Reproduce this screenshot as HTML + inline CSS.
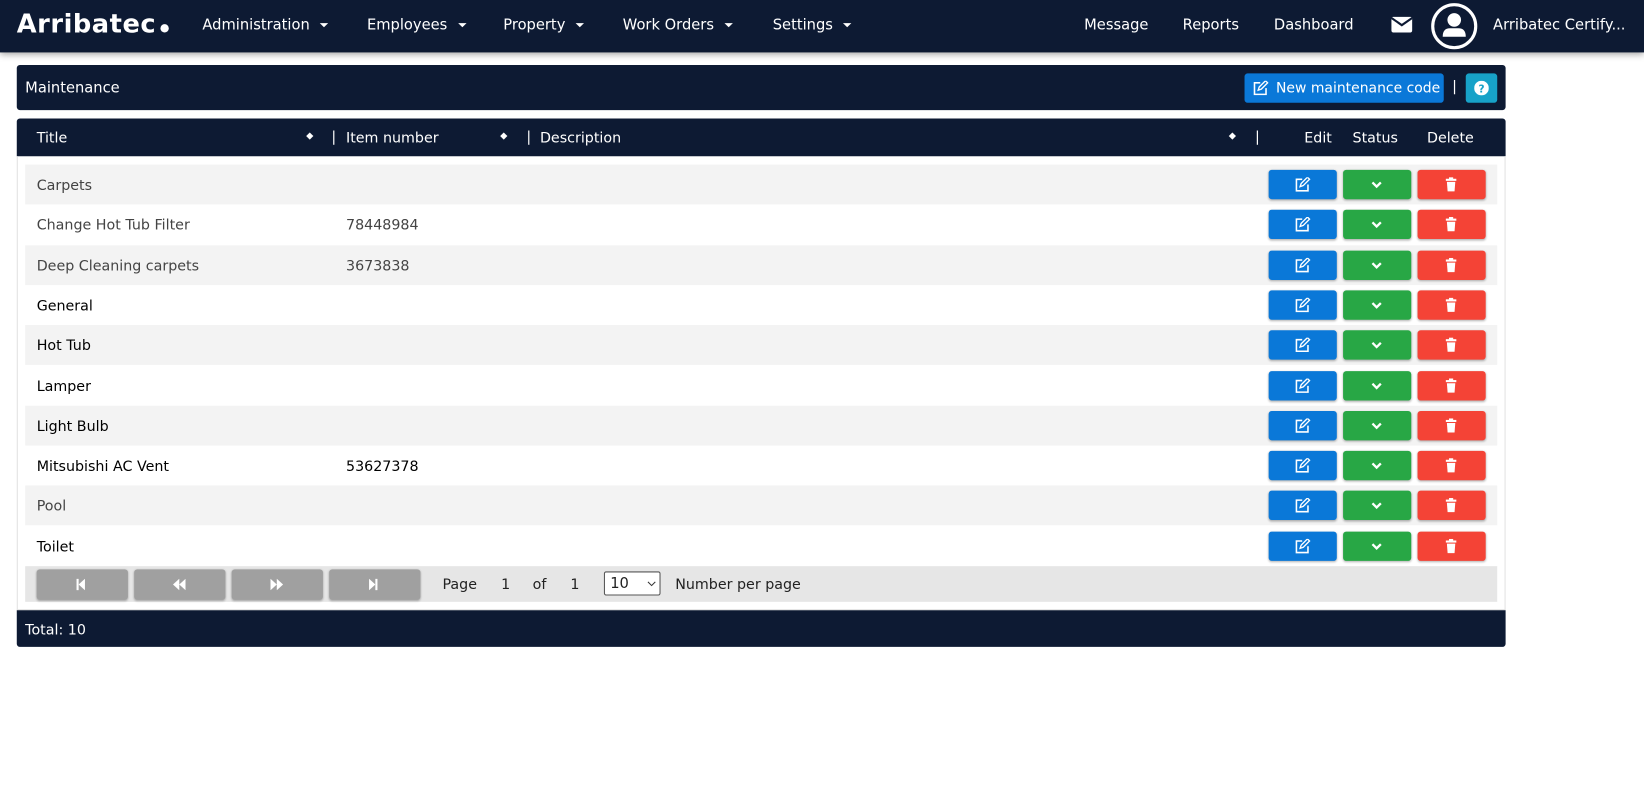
<!DOCTYPE html>
<html><head><meta charset="utf-8"><style>
*{box-sizing:border-box;margin:0;padding:0}
body{width:1644px;height:797px;background:#fff;font-family:"DejaVu Sans","Liberation Sans",sans-serif;font-size:13.6px;color:#222;position:relative;overflow:hidden}
#w{position:absolute;left:0;top:0;width:1568px;height:760px;transform:scale(1.04847);transform-origin:0 0}
.nav{position:absolute;left:0;top:0;width:1568px;height:50px;background:#0d1a33;box-shadow:0 2px 6px rgba(0,0,0,.35);color:#fff}
.nav span{position:absolute;top:16px;font-size:14px}
.logo{position:absolute;left:16px;top:8px;font-size:24.5px;font-weight:bold;letter-spacing:0.5px;color:#fff}
.car{display:inline-block;width:0;height:0;border-left:4px solid transparent;border-right:4px solid transparent;border-top:4px solid #fff;margin-left:10px;vertical-align:middle}
.bar{position:absolute;left:16px;width:1420px;background:#0d1a33;color:#fff;border-radius:3px}
.row{position:absolute;left:24px;width:1404px;height:38px}
.row span{position:absolute;top:12px}
.btn{position:absolute;top:5px;width:65px;height:28px;border-radius:3px;box-shadow:0 1px 2px rgba(0,0,0,.3)}
.b1{left:1186px;background:#0a78d8}.b2{left:1257px;background:#28a745}.b3{left:1328px;background:#f44336}
.btn svg{position:absolute;left:25px;top:7px}
.pg{position:absolute;top:3px;width:87px;height:29px;background:#a0a0a0;border-radius:3px;box-shadow:0 1px 2px rgba(0,0,0,.3)}
.pg svg{position:absolute;left:37px;top:9px}
</style></head><body><div id="w">
<div class="nav">
<div class="logo">Arribatec<span style="position:static;display:inline-block;width:8px;height:8px;background:#fff;border-radius:50%;margin-left:4px"></span></div>
<span style="left:193px">Administration<i class="car"></i></span>
<span style="left:350px">Employees<i class="car"></i></span>
<span style="left:480px">Property<i class="car"></i></span>
<span style="left:594px">Work Orders<i class="car"></i></span>
<span style="left:737px">Settings<i class="car"></i></span>
<span style="left:1034px">Message</span>
<span style="left:1128px">Reports</span>
<span style="left:1215px">Dashboard</span>
<svg style="position:absolute;left:1327px;top:16px" width="20" height="15" viewBox="0 0 20 15"><rect x="0" y="0" width="20" height="15" rx="2" fill="#fff"/><path d="M0 1 L10 8 L20 1" stroke="#0d1a33" stroke-width="2" fill="none"/></svg>
<svg style="position:absolute;left:1364px;top:2px" width="46" height="46" viewBox="0 0 46 46"><circle cx="23" cy="23" r="20.5" stroke="#fff" stroke-width="3" fill="none"/><circle cx="23" cy="17" r="6.5" fill="#fff"/><path d="M12 33 Q12 25 19 25 L27 25 Q34 25 34 33 Z" fill="#fff"/></svg>
<span style="left:1424px">Arribatec Certify...</span>
</div>
<div class="bar" style="top:62px;height:43px"><span style="position:absolute;left:8px;top:14px;font-size:14px">Maintenance</span>
<div style="position:absolute;left:1171px;top:8px;width:190px;height:28px;background:#0a78d8;border-radius:3px;font-size:13.3px;line-height:30px;padding-left:30px;white-space:nowrap">New maintenance code
<svg style="position:absolute;left:8px;top:7px" width="15" height="14" viewBox="0 0 15 14"><path d="M7 2H1.5v11h11V7" stroke="#fff" stroke-width="1.5" fill="none"/><path d="M5 9l1-3 6-6 2 2-6 6z" stroke="#fff" stroke-width="1.3" fill="none"/></svg></div>
<span style="position:absolute;left:1369px;top:13px">|</span>
<div style="position:absolute;left:1382px;top:8px;width:30px;height:28px;background:#17a2c8;border-radius:3px"><svg style="position:absolute;left:8px;top:7px" width="14" height="14"><circle cx="7" cy="7" r="7" fill="#fff"/><text x="7" y="11" font-size="10" font-weight="bold" text-anchor="middle" fill="#17a2c8" font-family="DejaVu Sans">?</text></svg></div>
</div>
<div class="bar" style="top:113px;height:36px;border-radius:3px 3px 0 0">
<span style="position:absolute;left:19px;top:11px">Title</span><span style="position:absolute;left:276px;top:12px;font-size:9px">◆</span><span style="position:absolute;left:300px;top:10px">|</span>
<span style="position:absolute;left:314px;top:11px">Item number</span><span style="position:absolute;left:461px;top:12px;font-size:9px">◆</span><span style="position:absolute;left:486px;top:10px">|</span>
<span style="position:absolute;left:499px;top:11px">Description</span><span style="position:absolute;left:1156px;top:12px;font-size:9px">◆</span><span style="position:absolute;left:1181px;top:10px">|</span>
<span style="position:absolute;left:1228px;top:11px">Edit</span><span style="position:absolute;left:1274px;top:11px">Status</span><span style="position:absolute;left:1345px;top:11px">Delete</span>
</div>
<div style="position:absolute;left:16px;top:149px;width:1420px;height:433px;border:1px solid #e2e2e2;border-top:none"></div>
<div id="rows"></div>
<div class="row" style="top:540px;height:34px;background:#e6e6e6">
<div class="pg" style="left:11px"><svg width="10" height="11"><rect x="1" y="0" width="2" height="11" fill="#fff"/><path d="M9 0v11L3 5.5z" fill="#fff"/></svg></div>
<div class="pg" style="left:104px"><svg width="12" height="11"><path d="M6 0v11L0 5.5zM12 0v11L6 5.5z" fill="#fff"/></svg></div>
<div class="pg" style="left:197px"><svg width="12" height="11"><path d="M0 0v11L6 5.5zM6 0v11L12 5.5z" fill="#fff"/></svg></div>
<div class="pg" style="left:290px"><svg width="10" height="11"><path d="M1 0v11L7 5.5z" fill="#fff"/><rect x="7" y="0" width="2" height="11" fill="#fff"/></svg></div>
<span style="left:398px;top:10px">Page</span><span style="left:454px;top:10px">1</span><span style="left:484px;top:10px">of</span><span style="left:520px;top:10px">1</span>
<div style="position:absolute;left:552px;top:5px;width:54px;height:23px;border:1px solid #555;background:#fff;border-radius:2px;font-size:14px;padding:3px 5px">10<svg style="position:absolute;left:40px;top:8px" width="9" height="6"><path d="M1 1l3.5 3.5L8 1" stroke="#333" fill="none"/></svg></div>
<span style="left:620px;top:10px">Number per page</span>
</div>
<div class="bar" style="top:582px;height:35px;border-radius:0 0 3px 3px"><span style="position:absolute;left:8px;top:11px">Total: 10</span></div>
</div>
<script>
var d=[["Carpets","",1],["Change Hot Tub Filter","78448984",0],["Deep Cleaning carpets","3673838",1],["General","",0],["Hot Tub","",1],["Lamper","",0],["Light Bulb","",1],["Mitsubishi AC Vent","53627378",0],["Pool","",1],["Toilet","",0]];
var h="";d.forEach(function(r,i){var c=(i<3||i==8)?"#444":"#000";h+='<div class="row" style="top:'+(157+i*38.3)+'px;background:'+(r[2]?'#f3f3f3':'#fff')+';color:'+c+'"><span style="left:11px">'+r[0]+'</span><span style="left:306px">'+r[1]+'</span>'+
'<div class="btn b1"><svg width="15" height="14" viewBox="0 0 15 14"><path d="M7 2H1.5v11h11V7" stroke="#fff" stroke-width="1.5" fill="none"/><path d="M5 9l1-3 6-6 2 2-6 6z" stroke="#fff" stroke-width="1.3" fill="none"/></svg></div>'+
'<div class="btn b2"><svg width="14" height="14" viewBox="0 0 14 14"><path d="M3 5l4 4 4-4" stroke="#fff" stroke-width="2.2" fill="none"/></svg></div>'+
'<div class="btn b3"><svg width="14" height="14" viewBox="0 0 14 14"><rect x="2" y="1.5" width="10" height="2" fill="#fff"/><rect x="5" y="0" width="4" height="2" fill="#fff"/><path d="M3 4.5h8l-.7 9h-6.6z" fill="#fff"/></svg></div></div>';});
document.getElementById("rows").outerHTML=h;
</script>
</body></html>
